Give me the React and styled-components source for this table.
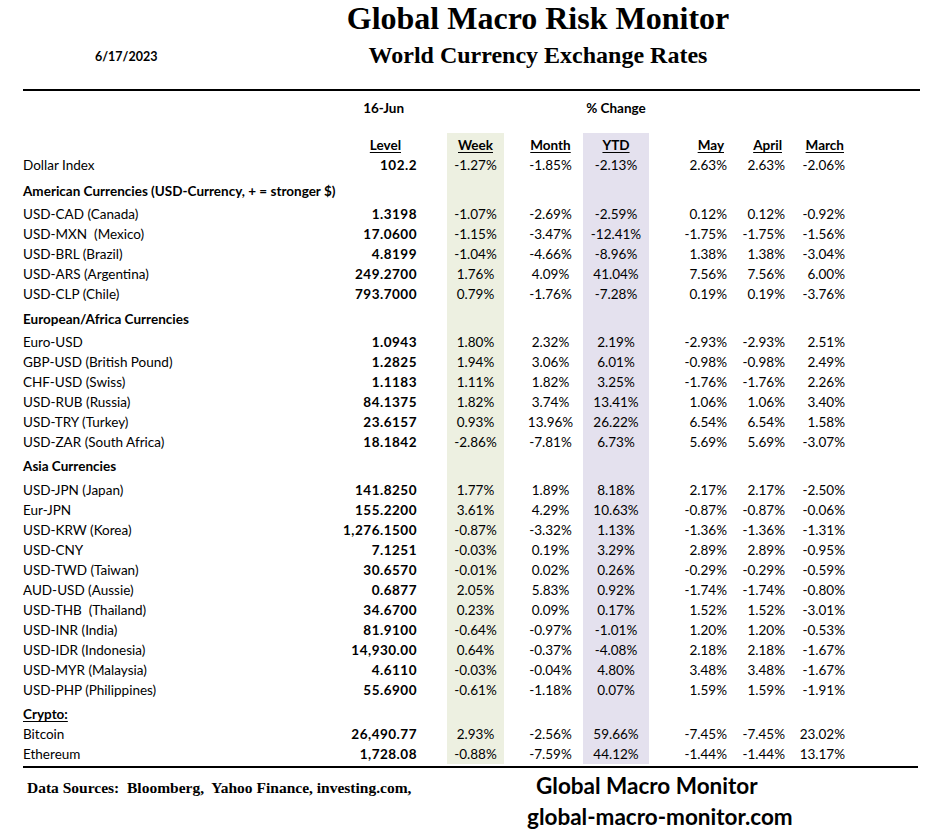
import styled, { createGlobalStyle } from 'styled-components'

const GlobalStyle = createGlobalStyle`
  body {
    margin: 0;
    background: #ffffff;
  }
`

const WEEK_BG = '#edf0e1'
const YTD_BG = '#e4e1ee'

const Page = styled.div`
  width: 928px;
  height: 831px;
  overflow: hidden;
  background: #ffffff;
  color: #000000;
  font-family: Lato, 'Noto Sans', sans-serif;
`

const Header = styled.div`
  display: flex;
  height: 70px;
`

const DateLabel = styled.div`
  width: 250px;
  box-sizing: border-box;
  padding: 49px 0 0 95px;
  font-size: 12.5px;
  font-weight: 700;
  line-height: 16px;
`

const TitleBlock = styled.div`
  width: 576px;
  display: flex;
  flex-direction: column;
  align-items: center;
  font-family: 'Liberation Serif', 'Times New Roman', serif;
  font-weight: 700;
`

const Title = styled.div`
  font-size: 32px;
  line-height: 36px;
`

const Subtitle = styled.div`
  margin-top: 4px;
  font-size: 24px;
  line-height: 30px;
`

const Rule = styled.div`
  margin: ${(p) => p.$mt || 0}px 0 0 23px;
  width: ${(p) => p.$w}px;
  height: 2px;
  background: #000000;
`

const Table = styled.div`
  padding-left: 23px;
  display: flex;
  flex-direction: column;
`

const Row = styled.div`
  display: grid;
  grid-template-columns: 307px 87px 30px 57px 79px 66px 78px 58px 60px;
  height: ${(p) => p.$h || 20}px;
  margin-top: ${(p) => p.$mt || 0}px;
`

const Cell = styled.div`
  box-sizing: border-box;
  grid-column: ${(p) => (p.$span ? `span ${p.$span}` : 'auto')};
  padding-top: ${(p) => p.$pt || 0}px;
  padding-left: ${(p) => p.$pl || 0}px;
  padding-right: ${(p) => p.$pr || 0}px;
  text-align: ${(p) => p.$align || 'left'};
  background: ${(p) => p.$bg || 'transparent'};
  font-size: 13.5px;
  line-height: 20px;
  font-weight: ${(p) => (p.$bold ? 700 : 400)};
  letter-spacing: ${(p) => (p.$wide ? '0.5px' : 'normal')};
  text-decoration: ${(p) => (p.$underline ? 'underline' : 'none')};
  text-underline-offset: 2px;
  white-space: pre;
`

const Footer = styled.div`
  display: flex;
`

const Sources = styled.div`
  width: 500px;
  padding: 11px 0 0 27px;
  font-family: 'Liberation Serif', 'Times New Roman', serif;
  font-weight: 700;
  font-size: 15.5px;
  line-height: 18px;
  white-space: pre;
`

const Brand = styled.div`
  display: flex;
  flex-direction: column;
  gap: 5px;
  padding-top: 5px;
  font-weight: 700;
  font-size: 22.5px;
  line-height: 26px;
`

const BrandName = styled.div`
  padding-left: 9px;
`

const valueCols = [
  { align: 'center', bg: WEEK_BG },
  { align: 'center', pl: 14 },
  { align: 'center', bg: YTD_BG },
  { align: 'right' },
  { align: 'right' },
  { align: 'right' },
]

const sections = [
  {
    title: 'American Currencies (USD-Currency, + = stronger $)',
    h: 29,
    pt: 6,
    rows: [
      ['USD-CAD (Canada)', '1.3198', '-1.07%', '-2.69%', '-2.59%', '0.12%', '0.12%', '-0.92%'],
      ['USD-MXN  (Mexico)', '17.0600', '-1.15%', '-3.47%', '-12.41%', '-1.75%', '-1.75%', '-1.56%'],
      ['USD-BRL (Brazil)', '4.8199', '-1.04%', '-4.66%', '-8.96%', '1.38%', '1.38%', '-3.04%'],
      ['USD-ARS (Argentina)', '249.2700', '1.76%', '4.09%', '41.04%', '7.56%', '7.56%', '6.00%'],
      ['USD-CLP (Chile)', '793.7000', '0.79%', '-1.76%', '-7.28%', '0.19%', '0.19%', '-3.76%'],
    ],
  },
  {
    title: 'European/Africa Currencies',
    h: 28,
    pt: 5,
    rows: [
      ['Euro-USD', '1.0943', '1.80%', '2.32%', '2.19%', '-2.93%', '-2.93%', '2.51%'],
      ['GBP-USD (British Pound)', '1.2825', '1.94%', '3.06%', '6.01%', '-0.98%', '-0.98%', '2.49%'],
      ['CHF-USD (Swiss)', '1.1183', '1.11%', '1.82%', '3.25%', '-1.76%', '-1.76%', '2.26%'],
      ['USD-RUB (Russia)', '84.1375', '1.82%', '3.74%', '13.41%', '1.06%', '1.06%', '3.40%'],
      ['USD-TRY (Turkey)', '23.6157', '0.93%', '13.96%', '26.22%', '6.54%', '6.54%', '1.58%'],
      ['USD-ZAR (South Africa)', '18.1842', '-2.86%', '-7.81%', '6.73%', '5.69%', '5.69%', '-3.07%'],
    ],
  },
  {
    title: 'Asia Currencies',
    h: 28,
    pt: 4,
    rows: [
      ['USD-JPN (Japan)', '141.8250', '1.77%', '1.89%', '8.18%', '2.17%', '2.17%', '-2.50%'],
      ['Eur-JPN', '155.2200', '3.61%', '4.29%', '10.63%', '-0.87%', '-0.87%', '-0.06%'],
      ['USD-KRW (Korea)', '1,276.1500', '-0.87%', '-3.32%', '1.13%', '-1.36%', '-1.36%', '-1.31%'],
      ['USD-CNY', '7.1251', '-0.03%', '0.19%', '3.29%', '2.89%', '2.89%', '-0.95%'],
      ['USD-TWD (Taiwan)', '30.6570', '-0.01%', '0.02%', '0.26%', '-0.29%', '-0.29%', '-0.59%'],
      ['AUD-USD (Aussie)', '0.6877', '2.05%', '5.83%', '0.92%', '-1.74%', '-1.74%', '-0.80%'],
      ['USD-THB  (Thailand)', '34.6700', '0.23%', '0.09%', '0.17%', '1.52%', '1.52%', '-3.01%'],
      ['USD-INR (India)', '81.9100', '-0.64%', '-0.97%', '-1.01%', '1.20%', '1.20%', '-0.53%'],
      ['USD-IDR (Indonesia)', '14,930.00', '0.64%', '-0.37%', '-4.08%', '2.18%', '2.18%', '-1.67%'],
      ['USD-MYR (Malaysia)', '4.6110', '-0.03%', '-0.04%', '4.80%', '3.48%', '3.48%', '-1.67%'],
      ['USD-PHP (Philippines)', '55.6900', '-0.61%', '-1.18%', '0.07%', '1.59%', '1.59%', '-1.91%'],
    ],
  },
  {
    title: 'Crypto:',
    h: 24,
    pt: 4,
    crypto: true,
    rows: [
      ['Bitcoin', '26,490.77', '2.93%', '-2.56%', '59.66%', '-7.45%', '-7.45%', '23.02%'],
      ['Ethereum', '1,728.08', '-0.88%', '-7.59%', '44.12%', '-1.44%', '-1.44%', '13.17%'],
    ],
  },
]

const DataRow = ({ row }) => {
  const [label, level, ...values] = row
  return (
    <Row>
      <Cell>{label}</Cell>
      <Cell $align='right' $bold $wide>{level}</Cell>
      <Cell />
      {values.map((v, i) => (
        <Cell key={i} $align={valueCols[i].align} $bg={valueCols[i].bg} $pl={valueCols[i].pl}>
          {v}
        </Cell>
      ))}
    </Row>
  )
}

const SectionRow = ({ section }) => (
  <Row $h={section.h}>
    <Cell $span={3} $bold $underline={section.crypto} $pt={section.pt}>
      {section.title}
    </Cell>
    {valueCols.map((c, i) => (
      <Cell key={i} $bg={c.bg} />
    ))}
  </Row>
)

const headers = ['Week', 'Month', 'YTD', 'May', 'April', 'March']
const headerPad = [0, 0, 0, 3, 3, 1]

const App = () => {
  return (
    <Page>
      <GlobalStyle />
      <Header>
        <DateLabel>6/17/2023</DateLabel>
        <TitleBlock>
          <Title>Global Macro Risk Monitor</Title>
          <Subtitle>World Currency Exchange Rates</Subtitle>
        </TitleBlock>
      </Header>
      <Rule $mt={19} $w={897} />
      <Table>
        <Row $mt={7}>
          <Cell />
          <Cell $align='right' $bold $pr={13}>16-Jun</Cell>
          <Cell />
          <Cell />
          <Cell />
          <Cell $align='center' $bold>% Change</Cell>
        </Row>
        <Row $h={22} $mt={15}>
          <Cell />
          <Cell $align='right' $bold $underline $pr={16} $pt={2}>Level</Cell>
          <Cell />
          {headers.map((h, i) => (
            <Cell
              key={h}
              $align={valueCols[i].align}
              $bg={valueCols[i].bg}
              $pl={valueCols[i].pl}
              $pr={headerPad[i]}
              $pt={2}
              $bold
              $underline
            >
              {h}
            </Cell>
          ))}
        </Row>
        <DataRow row={['Dollar Index', '102.2', '-1.27%', '-1.85%', '-2.13%', '2.63%', '2.63%', '-2.06%']} />
        {sections.map((s) => (
          <div key={s.title}>
            <SectionRow section={s} />
            {s.rows.map((r) => (
              <DataRow key={r[0]} row={r} />
            ))}
          </div>
        ))}
      </Table>
      <Rule $mt={2} $w={895} />
      <Footer>
        <Sources>Data Sources:  Bloomberg,  Yahoo Finance, investing.com,</Sources>
        <Brand>
          <BrandName>Global Macro Monitor</BrandName>
          <div>global-macro-monitor.com</div>
        </Brand>
      </Footer>
    </Page>
  )
}

export default App
